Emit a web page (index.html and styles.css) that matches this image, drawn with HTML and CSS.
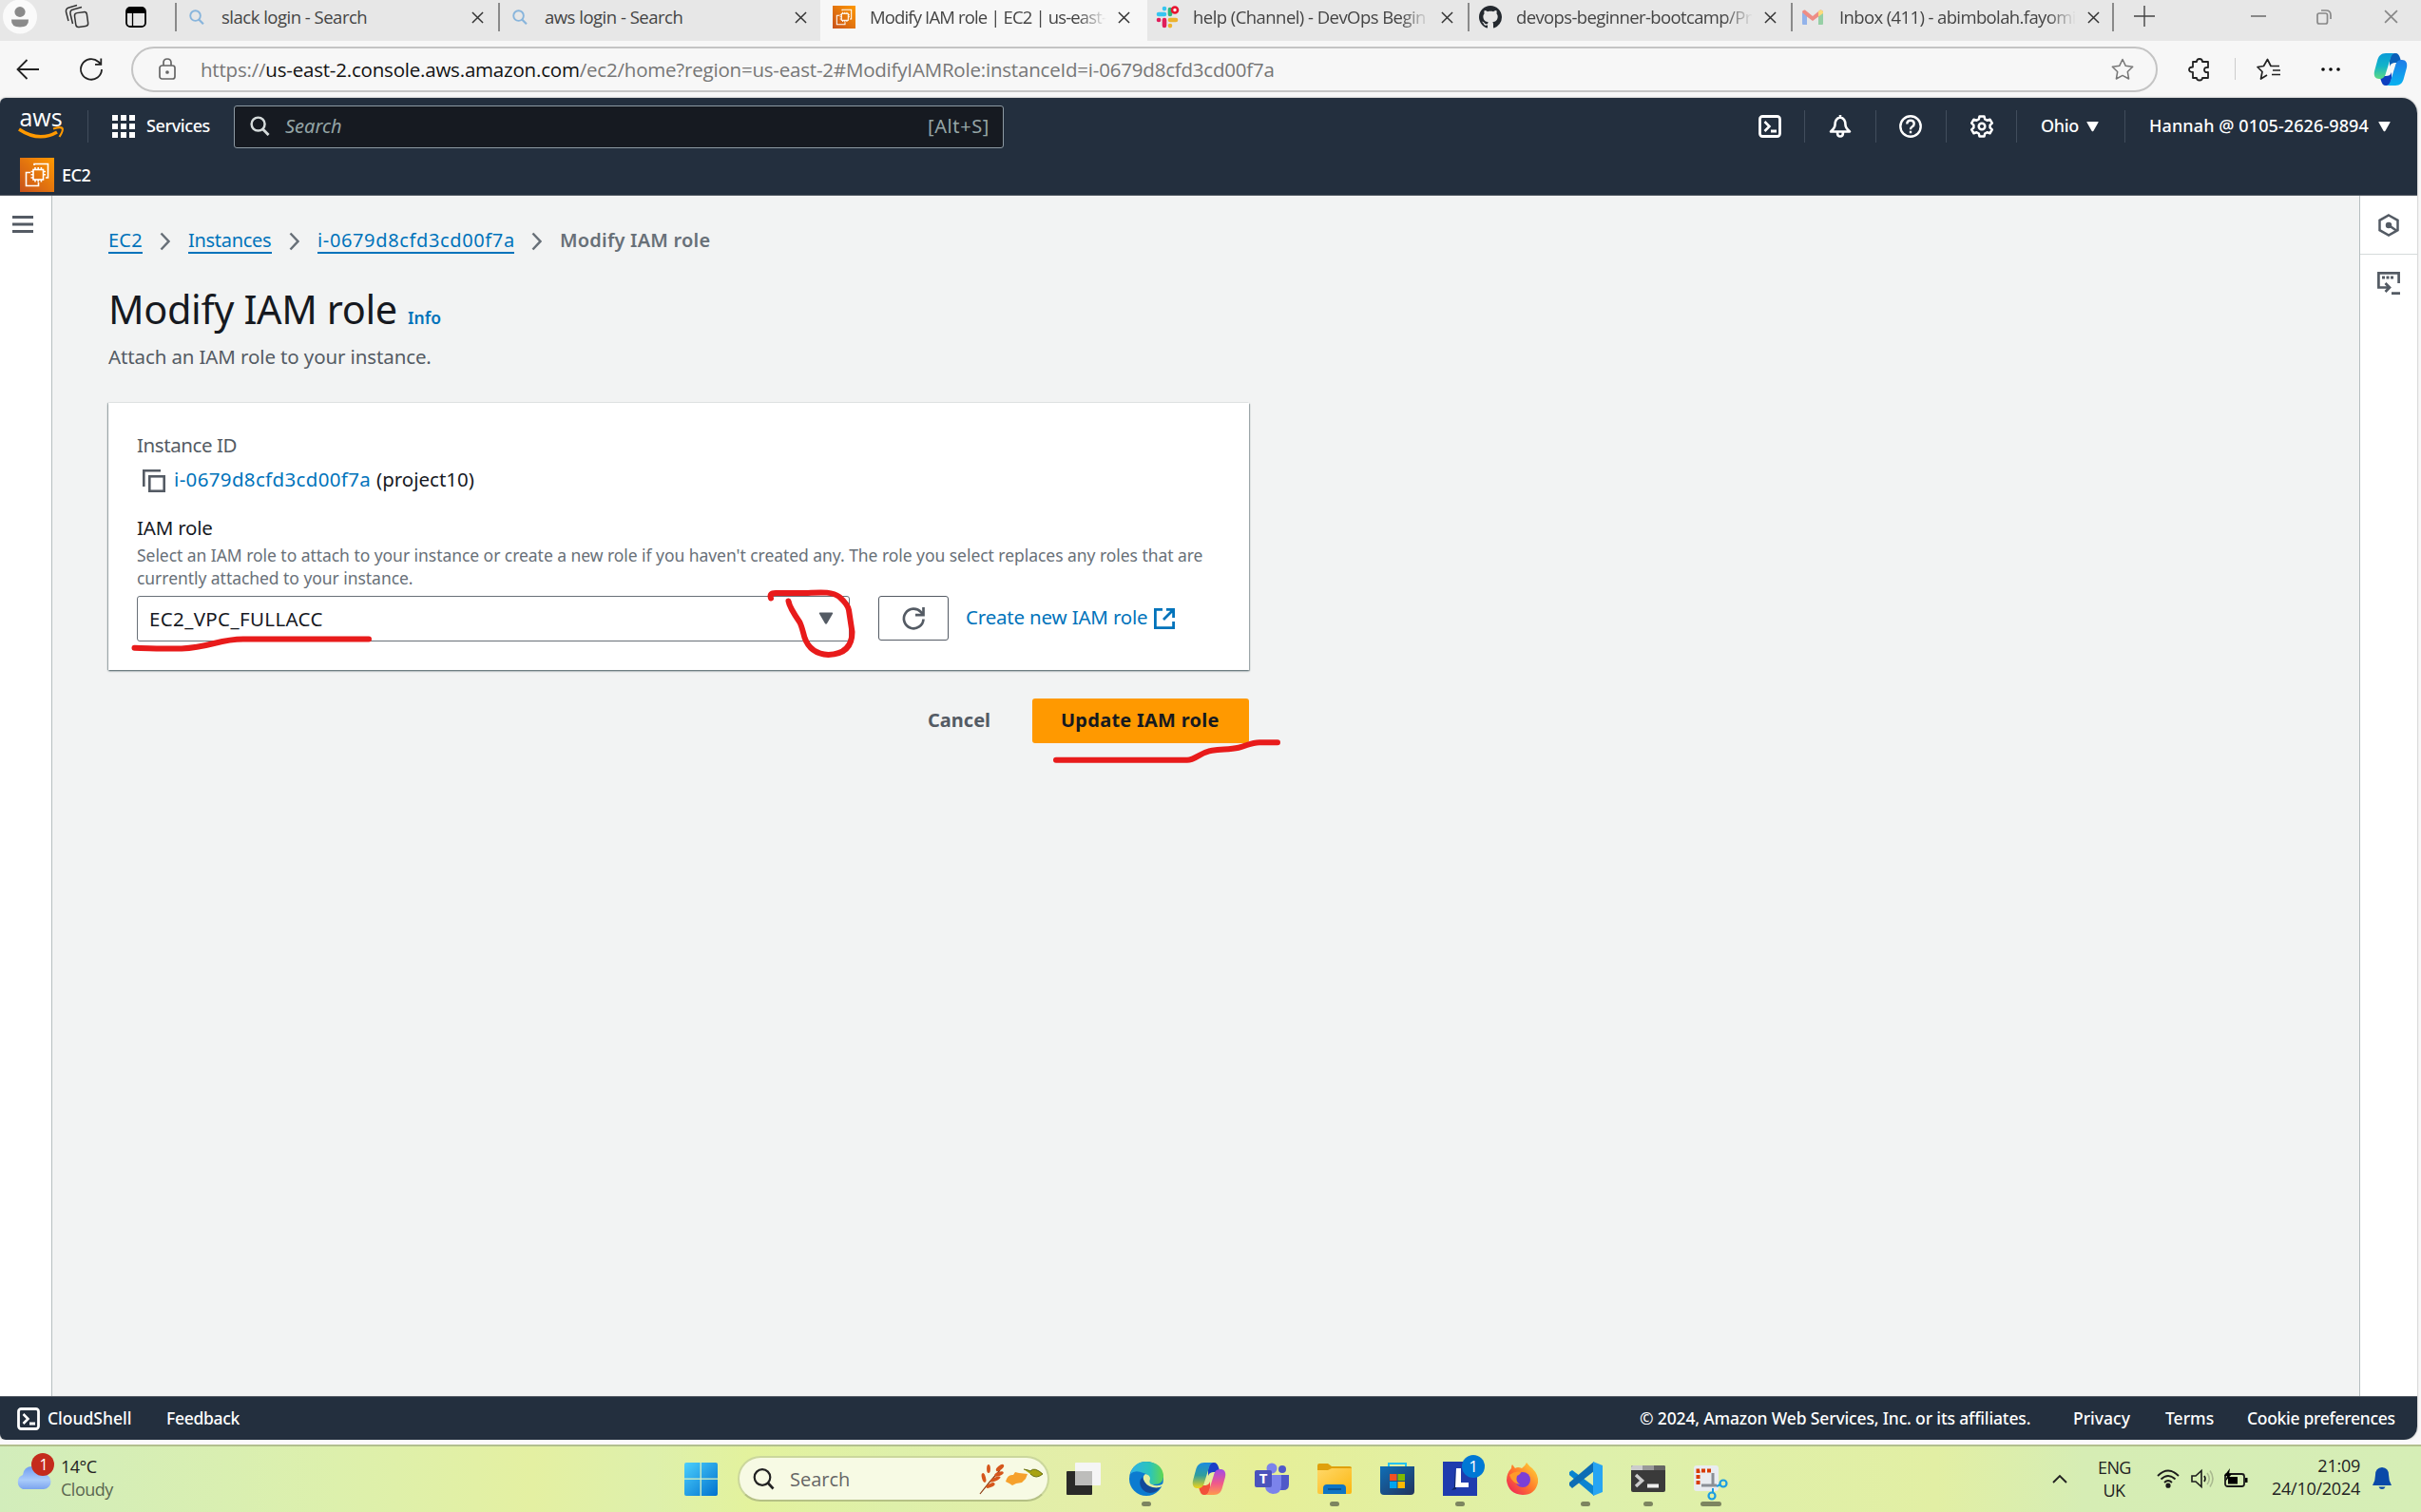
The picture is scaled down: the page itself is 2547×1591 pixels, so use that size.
FILE: index.html
```html
<!DOCTYPE html>
<html lang="en">
<head>
<meta charset="utf-8">
<title>Modify IAM role | EC2 | us-east-2</title>
<link rel="stylesheet" href="styles.css">
</head>
<body>
<svg class="defs" width="0" height="0">
  <defs>
    <linearGradient id="ec2g" x1="0" y1="1" x2="1" y2="0"><stop offset="0" stop-color="#c8511b"/><stop offset="1" stop-color="#f90"/></linearGradient>
    <linearGradient id="wing" x1="0" y1="0" x2="1" y2="1"><stop offset="0" stop-color="#4cd0fd"/><stop offset="1" stop-color="#0071ce"/></linearGradient>
    <linearGradient id="cpa" x1="0" y1="0" x2="0" y2="1"><stop offset="0" stop-color="#0a9bd8"/><stop offset=".5" stop-color="#12b4c8"/><stop offset="1" stop-color="#5fd983"/></linearGradient>
    <linearGradient id="cpb" x1="0" y1="0" x2="0" y2="1"><stop offset="0" stop-color="#08b3f0"/><stop offset="1" stop-color="#1f7be8"/></linearGradient>
    <linearGradient id="cpc" x1="0" y1="0" x2="0" y2="1"><stop offset="0" stop-color="#1a8be0"/><stop offset=".5" stop-color="#2f9e9c"/><stop offset="1" stop-color="#f3d516"/></linearGradient>
    <linearGradient id="cpd" x1="0" y1="0" x2="0" y2="1"><stop offset="0" stop-color="#ff9a4d"/><stop offset=".45" stop-color="#f0598a"/><stop offset="1" stop-color="#a14be8"/></linearGradient>
    <linearGradient id="edgea" x1="0" y1="0" x2="1" y2="0"><stop offset="0" stop-color="#2fb2e8"/><stop offset=".6" stop-color="#2cc5b8"/><stop offset="1" stop-color="#61d84e"/></linearGradient>
    <linearGradient id="fold" x1="0" y1="0" x2="1" y2="1"><stop offset="0" stop-color="#ffd869"/><stop offset="1" stop-color="#fcb710"/></linearGradient>
    <linearGradient id="store" x1="0" y1="0" x2="1" y2="1"><stop offset="0" stop-color="#0f6fb8"/><stop offset="1" stop-color="#22335c"/></linearGradient>
    <linearGradient id="fox" x1="1" y1="0" x2="0" y2="1"><stop offset="0" stop-color="#ffe23a"/><stop offset=".5" stop-color="#ff7a2b"/><stop offset="1" stop-color="#ec1361"/></linearGradient>
    <linearGradient id="cloud" x1="0" y1="0" x2="0" y2="1"><stop offset="0" stop-color="#6f9cf0"/><stop offset=".6" stop-color="#a9cbfa"/><stop offset="1" stop-color="#7ba4ee"/></linearGradient>
    <symbol id="x" viewBox="0 0 14 14"><path d="M1 1l12 12M13 1L1 13" fill="none" stroke="currentColor" stroke-width="1.6"/></symbol>
    <symbol id="mag" viewBox="0 0 22 22"><circle cx="9" cy="9" r="7.3" fill="none" stroke="currentColor" stroke-width="2.6"/><path d="M14 14.5l6.5 6.5" stroke="currentColor" stroke-width="3"/></symbol>
    <symbol id="ec2" viewBox="0 0 36 36"><rect width="36" height="36" fill="url(#ec2g)"/><g fill="none" stroke="#fff" stroke-width="1.6"><rect x="14" y="12.5" width="10.5" height="10.5"/><path d="M15 8V6.5h14.5V21H27M11 15.500H6.500V29.500H19.500V26M16 10v2.500M19.200 10v2.500M22.400 10v2.500M16 23v2.500M19.200 23v2.500M22.400 23v2.500M11.500 14.500H14M11.500 17.700H14M11.500 21H14M24.500 14.500H27M24.500 17.700H27"/></g></symbol>
    <symbol id="shell" viewBox="0 0 24 24"><rect x="1.500" y="1.500" width="21" height="21" rx="2.800" fill="none" stroke="#fff" stroke-width="2.800"/><path d="M6.500 7l5 5-5 5" fill="none" stroke="#fff" stroke-width="2.500"/><path d="M13 17h6" stroke="#fff" stroke-width="2.800"/></symbol>
    <symbol id="tri" viewBox="0 0 14 12"><path d="M1 .5h12q1 0 .5 1L8 11q-1 1.500-2 0L.5 1.500Q0 .5 1 .5z" fill="currentColor"/></symbol>
    <symbol id="chev" viewBox="0 0 12 20"><path d="M1.500 1.500l8 8.500-8 8.500" fill="none" stroke="#687078" stroke-width="2.500"/></symbol>
    <symbol id="ribbon" viewBox="0 0 36 34"><path d="M13 0h10c-3 0-4 2-5 5l-5 16c-1 4-3 6-7 6C2 27 0 24 1 19L4 8c1-5 4-8 9-8z"/></symbol>
    <symbol id="foldtop" viewBox="0 0 36 34"><path d="M17 7c1-4 2-7 5-7h1c3 0 4 2 5 5l1.500 5H23c-3 0-5 1-6 4z"/></symbol>
  </defs>
</svg>

<div class="tabstrip">
  <svg class="avatar" viewBox="0 0 36 36"><circle cx="18" cy="17.500" r="18" fill="#fafafa"/><ellipse cx="18" cy="12.500" rx="5.600" ry="5.400" fill="#8a8a8a"/><path d="M9 20.500h18q.5 8-9 8t-9-8z" fill="#8a8a8a"/></svg>
  <svg class="workspaces" viewBox="0 0 26 24" fill="none" stroke="#333" stroke-width="1.500"><rect x="11" y="8" width="13" height="15" rx="3" transform="rotate(-8 18 15)"/><path d="M8.500 20L6 9.500q-.5-4 3-4.500l9-2.500M4 17L1.500 7.500Q1 4 4.500 3L13 .5"/></svg>
  <svg class="tabactions" viewBox="0 0 22 22"><rect x="1" y="1" width="20" height="20" rx="4" fill="none" stroke="#000" stroke-width="1.800"/><path d="M1 7V4q0-3 4-3h12q4 0 4 3v3z"/><path d="M7.500 7v14" stroke="#000" stroke-width="1.300"/></svg>

  <div class="tab"><svg class="fav small"><use href="#mag"/></svg><span class="tab-title t-short">slack login - Search</span><svg class="close"><use href="#x"/></svg></div>
  <div class="tab"><svg class="fav small"><use href="#mag"/></svg><span class="tab-title t-short">aws login - Search</span><svg class="close"><use href="#x"/></svg></div>
  <div class="tab active"><svg class="fav"><use href="#ec2"/></svg><span class="tab-title fade t-iam">Modify IAM role | EC2 | us-east-</span><svg class="close"><use href="#x"/></svg></div>
  <div class="tab no-sep"><svg class="fav" viewBox="0 0 24 24" stroke-width="4.600" stroke-linecap="round"><path d="M9 3v.1M3 9h6" stroke="#36c5f0"/><path d="M15 4v5" stroke="#2eb67d"/><path d="M15 15h6M15 21v.1" stroke="#ecb22e"/><path d="M9 15v6M3 15h.1" stroke="#e01e5a"/><circle cx="20" cy="4.500" r="3" fill="#fff" stroke="#e8132f" stroke-width="2.600"/></svg><span class="tab-title fade">help (Channel) - DevOps Begin</span><svg class="close"><use href="#x"/></svg></div>
  <div class="tab"><svg class="fav" viewBox="0 0 16 16"><path fill="#24292f" d="M8 0C3.580 0 0 3.580 0 8c0 3.540 2.290 6.530 5.470 7.590.4.070.55-.17.55-.38 0-.19-.01-.82-.01-1.490-2.010.37-2.530-.49-2.690-.94-.09-.23-.48-.94-.82-1.130-.28-.15-.68-.52-.01-.53.63-.01 1.080.58 1.230.82.72 1.210 1.870.87 2.330.66.070-.52.28-.87.510-1.070-1.780-.2-3.640-.89-3.640-3.950 0-.87.310-1.590.82-2.150-.08-.2-.36-1.020.08-2.120 0 0 .67-.21 2.200.82.64-.18 1.320-.27 2-.27s1.360.09 2 .27c1.530-1.040 2.200-.82 2.200-.82.44 1.100.16 1.920.08 2.120.51.56.82 1.270.82 2.150 0 3.070-1.870 3.750-3.650 3.950.29.25.54.73.54 1.480 0 1.070-.01 1.930-.01 2.200 0 .21.15.46.55.38A8.010 8.010 0 0 0 16 8c0-4.420-3.580-8-8-8z"/></svg><span class="tab-title fade t-gh">devops-beginner-bootcamp/Pr</span><svg class="close"><use href="#x"/></svg></div>
  <div class="tab last"><svg class="fav gm" viewBox="0 0 22 16"><path d="M0 3v12q0 1 1 1h4V6z" fill="#93b3ea"/><path d="M22 3v12q0 1-1 1h-4V6z" fill="#96cfa5"/><path d="M0 3q0-3 3-2.500L11 7l8-6.500Q22 0 22 3L17 7.500 11 12 5 7.500z" fill="#ee8d85"/><path d="M17 2l2-1.500Q22 0 22 3v1l-5 3.500z" fill="#fbdc7c"/></svg><span class="tab-title fade t-gm">Inbox (411) - abimbolah.fayomi</span><svg class="close"><use href="#x"/></svg></div>
  <svg class="newtab" viewBox="0 0 22 22"><path d="M11 0v22M0 11h22" stroke="#444" stroke-width="1.400"/></svg>
  <svg class="winmin" viewBox="0 0 16 2"><path d="M0 1h16" stroke="#888" stroke-width="2"/></svg>
  <svg class="winres" viewBox="0 0 16 16" fill="none" stroke="#888" stroke-width="1.700"><rect x="1" y="4" width="10.500" height="11" rx="2"/><path d="M5 1h5q5 0 5 5v4"/></svg>
  <svg class="winclose"><use href="#x"/></svg>
</div>

<div class="toolbar">
  <svg class="back" viewBox="0 0 24 22" fill="none" stroke="#222" stroke-width="1.800"><path d="M24 11H1.500M11.500 1L1.500 11l10 10"/></svg>
  <svg class="reload" viewBox="0 0 24 24" fill="none" stroke="#222" stroke-width="1.800"><path d="M23 12a11 10.800 0 1 1-3.500-8L22 6.500M22.300.5v6.300H16"/></svg>
  <div class="urlbar">
    <svg class="lock" viewBox="0 0 18 23" fill="none" stroke="#666" stroke-width="1.700"><rect x="1" y="8" width="16" height="14" rx="2.500"/><path d="M5 8V5q0-4 4-4t4 4v3"/><circle cx="9" cy="15" r="1" fill="#666"/></svg>
    <span class="url">https://<b>us-east-2.console.aws.amazon.com</b>/ec2/home?region=us-east-2#ModifyIAMRole:instanceId=i-0679d8cfd3cd00f7a</span>
    <svg class="star" viewBox="0 0 24 24" fill="none" stroke="#777" stroke-width="1.500" stroke-linejoin="round"><path d="M12 1.500l3.300 6.800 7.400 1-5.400 5.200 1.300 7.500-6.600-3.600L5.400 22l1.300-7.500L1.300 9.300l7.400-1z"/></svg>
  </div>
  <svg class="puzzle" viewBox="0 0 24 24" fill="none" stroke="#222" stroke-width="1.800" stroke-linejoin="round"><path d="M5 4h4q0-3 3-3t3 3h6v6q-4-.5-4 2.500T21 15v6h-6q0 2.500-3 2.500T9 21H5v-6q-4 0-4-2.700T5 9.500z"/></svg>
  <i class="tsep"></i>
  <svg class="favs" viewBox="0 0 26 24" fill="none" stroke="#222" stroke-width="1.700" stroke-linejoin="round"><path d="M11 18l-6.500 4 1.500-7.500L1 9.500l6.500-1L11.500 1.500 15 8.500h9M17 13h8M16 17.500h9"/></svg>
  <svg class="dots" viewBox="0 0 20 4"><circle cx="2" cy="2" r="1.800"/><circle cx="10" cy="2" r="1.800"/><circle cx="18" cy="2" r="1.800"/></svg>
  <svg class="copilot" viewBox="0 0 36 34"><use href="#foldtop" width="36" height="34" fill="#0a5fb8"/><g transform="rotate(180 18 17)"><use href="#foldtop" width="36" height="34" fill="#0d3fc0"/><use href="#ribbon" width="36" height="34" fill="url(#cpb)"/></g><use href="#ribbon" width="36" height="34" fill="url(#cpa)"/></svg>
</div>

<div class="console">
  <header>
    <div class="nav">
      <div class="aws"><span>aws</span><svg viewBox="0 0 48 17"><path d="M1 2Q22 16 41 5" fill="none" stroke="#f90" stroke-width="3.500"/><path d="M37 1.500q8-2.500 9.500-.5t-3 9" fill="none" stroke="#f90" stroke-width="2.200"/></svg></div>
      <i class="nsep first"></i>
      <svg class="apps" viewBox="0 0 24 24" fill="#fff"><path d="M0 0h6v6H0zM9 0h6v6H9zM18 0h6v6h-6zM0 9h6v6H0zM9 9h6v6H9zM18 9h6v6h-6zM0 18h6v6H0zM9 18h6v6H9zM18 18h6v6h-6z"/></svg>
      <span class="services">Services</span>
      <div class="search"><svg><use href="#mag"/></svg><em>Search</em><span>[Alt+S]</span></div>
      <div class="navright">
        <svg class="ni"><use href="#shell"/></svg><i class="nsep"></i>
        <svg class="ni" viewBox="0 0 24 24" fill="none" stroke="#fff" stroke-width="2.600" stroke-linejoin="round"><path d="M12 2.500q5.500 1 5.500 8 0 3 4.500 7H2q4.500-4 4.500-7 0-7 5.500-8zM9 18.500q0 4 3 4t3-4M12 0v3"/></svg><i class="nsep"></i>
        <svg class="ni" viewBox="0 0 24 24" fill="none" stroke="#fff" stroke-width="2.400"><circle cx="12" cy="12" r="10.700"/><path d="M8.300 9.500q0-3.700 3.700-3.700t3.700 3.400q0 2-1.900 3T12 15v.3M12 16.800v2.400"/></svg><i class="nsep"></i>
        <svg class="ni" viewBox="0 0 24 24" fill="none" stroke="#fff" stroke-width="2.500" stroke-linejoin="round"><path d="M9.500 1.500h5l.7 3 2.300 1.200 3-1 2.300 4-2.200 2v2.600l2.200 2-2.300 4-3-1-2.300 1.200-.7 3h-5l-.7-3-2.300-1.200-3 1-2.300-4 2.200-2v-2.600l-2.200-2 2.300-4 3 1 2.300-1.200z"/><circle cx="12" cy="12" r="3.300"/></svg><i class="nsep"></i>
        <span class="ohio">Ohio</span><svg class="caret"><use href="#tri"/></svg><i class="nsep ns2"></i>
        <span class="user">Hannah @ 0105-2626-9894</span><svg class="caret"><use href="#tri"/></svg>
      </div>
    </div>
    <div class="favbar"><svg><use href="#ec2"/></svg><span>EC2</span></div>
  </header>

  <div class="body">
    <aside class="left"><svg viewBox="0 0 22 18" stroke="#545b64" stroke-width="3"><path d="M0 1.500h22M0 9h22M0 16.500h22"/></svg></aside>
    <main>
      <nav class="crumbs"><a class="c1">EC2</a><svg><use href="#chev"/></svg><a class="c2">Instances</a><svg><use href="#chev"/></svg><a class="c3">i-0679d8cfd3cd00f7a</a><svg><use href="#chev"/></svg><strong>Modify IAM role</strong></nav>
      <h1><span>Modify IAM role</span><small>Info</small></h1>
      <p class="desc">Attach an IAM role to your instance.</p>
      <section class="card">
        <div class="label muted">Instance ID</div>
        <div class="instance"><svg viewBox="0 0 24 24" fill="none" stroke="#545b64" stroke-width="2.600"><path d="M1.300 18V1.300H19"/><rect x="7.300" y="7.300" width="15.400" height="15.400"/></svg><a>i-0679d8cfd3cd00f7a</a><span>(project10)</span></div>
        <div class="label iam">IAM role</div>
        <p class="help"><span>Select an IAM role to attach to your instance or create a new role if you haven't created any. The role you select replaces any roles that are</span><br><span>currently attached to your instance.</span></p>
        <div class="controls">
          <div class="select"><span>EC2_VPC_FULLACC</span><svg><use href="#tri"/></svg></div>
          <div class="refresh"><svg viewBox="0 0 24 24" fill="none" stroke="#545b64" stroke-width="2.700"><path d="M22.500 12.500A10.300 10.300 0 1 1 20 5.200l2 2M22.500 0v8.200H14"/></svg></div>
          <a class="create">Create new IAM role</a>
          <svg class="ext" viewBox="0 0 22 22" fill="none" stroke="#0073bb" stroke-width="2.800"><path d="M9 1.400H1.400v19.200h19.200V14M13 1.400h7.600V10M20 2L10 12"/></svg>
        </div>
      </section>
      <div class="actions"><span class="cancel">Cancel</span><div class="update"><span>Update IAM role</span></div></div>
    </main>
    <aside class="right">
      <div class="tool"><svg viewBox="0 0 24 24" fill="none" stroke="#545b64" stroke-width="2.500"><path d="M12 1.500l9.500 5.300v10.400L12 22.500l-9.500-5.300V6.800z"/><circle cx="12" cy="12" r="2" fill="#545b64"/><path d="M12 12l8 5.500"/></svg></div>
      <div class="tool"><svg viewBox="0 0 24 24" fill="none" stroke="#545b64" stroke-width="2.700"><path d="M7 16.500H1.400V1.400h21.200V12M15 22.700h9M5 16.500h8M8.500 12l4.500 4.500L8.500 21"/><path d="M5 6h3M9.500 6h3M14 6h3" stroke-width="3"/></svg></div>
    </aside>
  </div>

  <footer><svg><use href="#shell"/></svg><span class="f1">CloudShell</span><span class="f2">Feedback</span><span class="f3">© 2024, Amazon Web Services, Inc. or its affiliates.</span><span class="f4">Privacy</span><span class="f5">Terms</span><span class="f6">Cookie preferences</span></footer>
</div>

<div class="taskbar">
  <div class="weather"><svg viewBox="0 0 42 40"><path d="M8 38a8 8 0 0 1 0-15q1-9 10-9t11 8a8 8 0 0 1 1 16z" fill="url(#cloud)"/><circle cx="29" cy="12" r="12" fill="#c42b1c"/><text x="30" y="18" text-anchor="middle" class="wbadge">1</text></svg><div><span class="temp">14°C</span><span class="cond">Cloudy</span></div></div>
  <div class="approw">
    <svg class="win" viewBox="0 0 36 36" fill="url(#wing)"><rect width="36" height="36" rx="2"/><path d="M17.700 0v36M0 17.700h36" stroke="#dff3c0" stroke-width="1.300"/></svg>
    <div class="tsearch"><svg class="tm" viewBox="0 0 22 22"><circle cx="10" cy="9.500" r="8.300" fill="none" stroke="#222" stroke-width="2.200"/><path d="M15.500 15l6 6.500" stroke="#222" stroke-width="2.600"/></svg><span>Search</span>
      <svg class="leaves" viewBox="0 0 66 31"><path d="M0 31Q10 18 21 6" stroke="#8c3a12" stroke-width="1.200" fill="none"/><g fill="#d5561b"><ellipse cx="9" cy="4.500" rx="1.900" ry="4.500"/><ellipse cx="21" cy="3.500" rx="2.300" ry="5" transform="rotate(50 21 3.500)"/><ellipse cx="4" cy="14" rx="2" ry="5" transform="rotate(-15 4 14)"/><ellipse cx="16" cy="15.500" rx="2" ry="6" transform="rotate(65 16 15.500)"/><ellipse cx="20" cy="10" rx="2" ry="5" transform="rotate(70 20 10)"/><ellipse cx="11" cy="22" rx="2" ry="5" transform="rotate(65 11 22)"/></g><path d="M21 18h6q2-8 8-7l2-3 4 1 9 1-2 5-4 4-6 1-4 2-3-2-4-2z" fill="#f6a12c"/><path d="M46 5q6 1 7 2 4-5 13 3-7 6-13 0" fill="#a8a312" stroke="#6a7010" stroke-width="1"/></svg></div>
    <div class="app first"><svg viewBox="0 0 36 36"><rect y="10" width="27" height="25" rx="1" fill="#2a2a28"/><rect x="9" y="1" width="27" height="24" rx="1" fill="#f5f5f5"/><rect x="9" y="10" width="18" height="15" fill="#bdbdbb"/></svg></div>
    <div class="app run"><svg viewBox="0 0 36 36"><circle cx="18" cy="18" r="18" fill="#0c7bd0"/><path d="M1 13Q5 0 18 0q17 1 18 15 0 9-10 9-7 0-5-4 1-7-6-8Q6 8 1 13z" fill="url(#edgea)"/><path d="M34 26q-6 4-13 1-5-3-6-8-1-4 2-6 5 1 5 5-2 5 2 6 6 3 12-1l1 2z" fill="#e3efa0"/><path d="M14 16q-5 5-1 12 6 8 16 3l4-4q-12 2-17-6-2-3-2-5z" fill="#12499a"/></svg></div>
    <div class="app"><svg viewBox="0 0 36 34"><use href="#foldtop" width="36" height="34" fill="#1a3fc8"/><g transform="rotate(180 18 17)"><use href="#foldtop" width="36" height="34" fill="#f2503a"/><use href="#ribbon" width="36" height="34" fill="url(#cpd)"/></g><use href="#ribbon" width="36" height="34" fill="url(#cpc)"/></svg></div>
    <div class="app"><svg viewBox="0 0 36 36"><circle cx="29" cy="8" r="4" fill="#5059c9"/><path d="M26 14h10v10q0 6-6 6h-4z" fill="#5059c9"/><circle cx="18" cy="7" r="5.500" fill="#7b83eb"/><path d="M11 14h17v11q0 9-9 9-8-1-8-9z" fill="#7b83eb"/><rect y="9" width="18" height="18" rx="2" fill="#4b53bc"/><text x="9" y="23" text-anchor="middle" class="teamst">T</text></svg></div>
    <div class="app run"><svg viewBox="0 0 36 36"><path d="M0 4q0-2 2-2h9l4 3h19q2 0 2 2v4H0z" fill="#dfa00c"/><path d="M0 9h11l4-2h21v25q0 2-2 2H2q-2 0-2-2z" fill="url(#fold)"/><path d="M6 34v-6q0-4 4-4h16q4 0 4 4v6z" fill="#0f75c4"/><path d="M11 29h14" stroke="#0a4a86" stroke-width="1.500"/></svg></div>
    <div class="app"><svg viewBox="0 0 36 36"><path d="M9 7V2h18v5" fill="none" stroke="#25c3f0" stroke-width="2"/><path d="M0 5h36v26q0 4-4 4H4q-4 0-4-4z" fill="url(#store)"/><path d="M10 13h7.500v7H10z" fill="#f25022"/><path d="M18.500 13H26v7h-7.500z" fill="#7fba00"/><path d="M10 21h7.500v7H10z" fill="#00a4ef"/><path d="M18.500 21H26v7h-7.500z" fill="#ffb900"/></svg></div>
    <div class="app run"><svg viewBox="0 0 36 36"><rect width="36" height="36" fill="#1f3cae"/><path d="M13 7l-1 20-3 3 5-1" fill="#0d2560"/><path d="M14 7h5v15h8v5H13z" fill="#fff"/></svg><b class="count">1</b></div>
    <div class="app"><svg viewBox="0 0 36 36"><path d="M22 1q3 4 6 6 7 7 6 15-3 13-16 13Q3 34 1 20 1 12 6 7q0-3 1-4l3 4q3-2 7 0 4-3 5-6z" fill="url(#fox)"/><circle cx="18" cy="19" r="8" fill="#7b3fd6"/><path d="M4 14q6-5 12-3 0 2-4 4-2 6 3 9-8-1-11-10z" fill="#ff9a2b"/></svg></div>
    <div class="app run"><svg viewBox="0 0 36 36"><path d="M1 11l3-2L27 26v10L1 14z" fill="#0a84d0"/><path d="M1 25l3 3L27 10V0L1 22z" fill="#0d6db5"/><path d="M26 0l10 4v28l-10 4z" fill="#27a5f3"/></svg></div>
    <div class="app run"><svg viewBox="0 0 36 36"><rect y="4" width="36" height="28" rx="2" fill="#3a3a3a"/><path d="M0 9V6q0-2 2-2h10v5z" fill="#ccc"/><path d="M12 4h12v5H12z" fill="#999"/><path d="M24 4h10q2 0 2 2v3H24z" fill="#666"/><path d="M5 14l6.500 6L5 26" fill="none" stroke="#ccc" stroke-width="3.500"/><path d="M17 25.500h12" stroke="#eee" stroke-width="4"/></svg></div>
    <div class="app run wide"><svg viewBox="0 0 36 36"><rect y="4" width="26" height="27" rx="3" fill="#e9ecf0"/><path d="M4.500 24V9.500H20" fill="none" stroke="#d83b01" stroke-width="4" stroke-dasharray="4 2"/><path d="M20 12v14M8 25h16" stroke="#8a8f96" stroke-width="3"/><circle cx="31" cy="23" r="3.500" fill="none" stroke="#1b9de2" stroke-width="2.200"/><circle cx="19" cy="36" r="3.500" fill="none" stroke="#1b9de2" stroke-width="2.200"/><path d="M24 26l4-2M20 28v5" stroke="#1b9de2" stroke-width="2"/></svg></div>
  </div>
  <div class="tray">
    <svg class="up" viewBox="0 0 16 10"><path d="M1 9l7-7 7 7" fill="none" stroke="#222" stroke-width="1.900"/></svg>
    <div class="lang"><span>ENG</span><span>UK</span></div>
    <svg class="wifi" viewBox="0 0 24 20" fill="none" stroke="#1b1b1b" stroke-width="1.800"><path d="M1 7q11-11 22 0M4.500 10.500q7.500-7 15 0M8 14q4-4 8 0"/><circle cx="12" cy="17.200" r="1.700" fill="#1b1b1b"/></svg>
    <svg class="vol" viewBox="0 0 24 20" fill="none" stroke="#1b1b1b" stroke-width="1.600"><path d="M1 7h4l6-5.500v17L5 13H1z"/><path d="M14 7q2 3 0 6"/><path d="M17 4q4.500 6 0 12M20 1.500q6 8.500 0 17" stroke="#a9b98f"/></svg>
    <svg class="bat" viewBox="0 0 25 20"><rect x="1" y="5" width="20" height="13" rx="2.500" fill="none" stroke="#1b1b1b" stroke-width="1.800"/><path d="M4 8h10v7.500H4z"/><path d="M22 9h2.500v5H22z"/><path d="M6-1L0 7h3l-2 6 7-8H5z"/></svg>
    <div class="clock"><span class="time">21:09</span><span class="date">24/10/2024</span></div>
    <svg class="tbell" viewBox="0 0 20 23" fill="#0a4aa8"><path d="M10 0q7 .5 7 8 0 6 3 11H0q3-5 3-11 0-7.500 7-8zM6.500 20.500h7Q12.500 23 10 23t-3.500-2.500z"/></svg>
  </div>
</div>

<svg class="ink" viewBox="0 0 2547 1591" fill="none" stroke="#e81b1b" stroke-width="6" stroke-linecap="round" stroke-linejoin="round">
  <path d="M141.500 681.700C158 682 175 683 191 682.500C222 681 230 672.500 256 672.500H388"/>
  <path d="M811 629.500q-2-5.500 5-5.500h26c16 0 32-3 41 4q9 8 10 14l3.500 23q0 23-25 24-19-1-25-18c-2-7-3-12-5-16q-11-16-12-22.500"/>
  <path d="M1111 799.700H1249c9 0 13-8 26-10 13-1.500 19-1 28-3 9-2 13-5.500 22-5.500h19"/>
</svg>
</body>
</html>
```
FILE: styles.css
```css
* { box-sizing: border-box; }
body { margin: 0; width: 2547px; height: 1591px; overflow: hidden; position: relative; display: flex; flex-direction: column; background: #f7f7f7; font-family: "Noto Sans", "Open Sans", sans-serif; color: #16191f; }
svg { display: block; flex: none; overflow: visible; }
.defs { position: absolute; }
span, a, strong, em { white-space: nowrap; }
i { display: block; flex: none; }

/* browser tabs */
.tabstrip { height: 43px; flex: none; background: #e7e7e7; display: flex; align-items: flex-start; font-family: "Open Sans", sans-serif; font-size: 18.500px; color: #444; }
.avatar { width: 36px; height: 36px; margin-left: 3px; }
.workspaces { width: 26px; height: 24px; margin: 5px 0 0 29px; }
.tabactions { width: 22px; height: 22px; margin: 7px 30px 0 38px; }
.tab { width: 340px; height: 43px; flex: none; position: relative; display: flex; align-items: center; padding: 0 15px 7px 15px; }
.tab::before { content: ""; position: absolute; left: 0; top: 3px; width: 2px; height: 30px; background: #8a8a8a; }
.tab.active::before, .tab.no-sep::before { display: none; }
.tab.last::after { content: ""; position: absolute; right: 0; top: 3px; width: 2px; height: 30px; background: #8a8a8a; }
.tab.active { background: #f7f7f7; box-shadow: -1px 0 0 #f7f7f7, 3px 0 0 #f7f7f7; }
.fav { width: 24px; height: 24px; margin-right: 15px; margin-left: -3px; }
.fav.small { width: 16px; height: 16px; color: #88b5dc; margin: 0 18px 0 0; }
.fav.gm { width: 22px; height: 16px; margin-right: 17px; margin-left: -3px; }
.tab-title { flex: 1; line-height: 30px; }
.fade { -webkit-mask-image: linear-gradient(90deg, #000 88%, transparent 100%); margin-right: 12px; letter-spacing: -.55px; }
.t-iam { letter-spacing: -.85px; }
.t-gh, .t-gm { letter-spacing: -.62px; }
.t-short { letter-spacing: -.5px; }
.close { width: 13px; height: 13px; color: #333; }
.newtab { width: 22px; height: 22px; margin: 6px 0 0 21px; }
.winmin { width: 16px; height: 2px; margin: 16px 0 0 101px; }
.winres { width: 16px; height: 16px; margin: 10px 0 0 53px; }
.winclose { width: 15px; height: 15px; margin: 10px 0 0 55px; color: #888; }

/* browser toolbar */
.toolbar { height: 60px; flex: none; display: flex; align-items: center; padding-bottom: 1px; background: #f7f7f7; }
.back { width: 24px; height: 22px; margin-left: 17px; }
.reload { width: 24px; height: 24px; margin-left: 43px; }
.urlbar { width: 2132px; height: 48px; margin-left: 30px; border: 2px solid #c4c4c4; border-radius: 24px; display: flex; align-items: center; padding: 0 23px 0 27px; }
.lock { width: 18px; height: 23px; }
.url { margin-left: 26px; font: 20.500px/40px "Open Sans", sans-serif; color: #767676; letter-spacing: -.2px; }
.url b { font-weight: 400; color: #111; }
.star { width: 24px; height: 24px; margin-left: auto; }
.puzzle { width: 24px; height: 24px; margin-left: 32px; }
.tsep { width: 1px; height: 23px; background: #ccc; margin-left: 25px; }
.favs { width: 26px; height: 24px; margin-left: 22px; }
.dots { width: 20px; height: 4px; margin-left: 42px; }
.copilot { width: 36px; height: 34px; margin-left: 35px; }

/* console chrome */
.console { width: 2543px; height: 1412px; flex: none; display: flex; flex-direction: column; background: #f2f3f3; border-radius: 6px 16px 14px 6px; overflow: hidden; box-shadow: 0 0 2px #888; }
header { height: 103px; flex: none; background: #232f3e; border-bottom: 1px solid #545b64; color: #fff; }
.nav { height: 60px; display: flex; align-items: center; padding-right: 28px; font-size: 18px; font-weight: 500; }
.nav > span, .navright > span { padding-bottom: 2px; }
.aws { width: 48px; margin-left: 19px; height: 36px; margin-top: -5px; }
.aws span { display: block; font: 500 25px/22px "Open Sans", sans-serif; letter-spacing: 0; height: 22px; text-align: center; margin-top: -1px; }
.aws svg { width: 48px; height: 17px; }
.nsep { width: 1px; height: 34px; background: #414d5c; margin: 0 24.700px; }
.nsep.first { margin: 0 25px; }
.apps { width: 24px; height: 24px; }
.services { margin-left: 12px; width: 92px; letter-spacing: -.4px; }
.search { width: 810px; height: 45px; border: 1px solid #8d9aa3; border-radius: 3px; background: #161a21; display: flex; align-items: center; padding: 0 14px 2px 16px; color: #95a5a6; font-size: 20px; font-weight: 400; }
.search svg { width: 21px; height: 21px; color: #d5dbdb; }
.search em { margin-left: 16px; }
.search span { margin-left: auto; letter-spacing: .6px; }
.navright { margin-left: auto; display: flex; align-items: center; }
.ni { width: 24px; height: 24px; }
.ohio { width: 40px; letter-spacing: -.3px; }
.user { width: 233px; letter-spacing: .1px; }
.caret { width: 13px; height: 12px; margin-left: 8px; }
.ns2 { margin: 0 25px 0 27px; }
.favbar { height: 42px; display: flex; align-items: center; padding-left: 21px; font-size: 18px; font-weight: 500; }
.favbar svg { width: 36px; height: 36px; }
.favbar span { margin-left: 8px; letter-spacing: -.5px; }

.body { height: 1263px; flex: none; display: flex; }
.left { width: 55px; background: #fff; border-right: 1px solid #b6bec0; padding: 21px 0 0 13px; flex: none; }
.left svg { width: 22px; height: 18px; }
.right { width: 61px; background: #fff; border-left: 1px solid #b6bec0; flex: none; }
.tool { height: 62px; border-bottom: 1px solid #d5dbdb; display: flex; align-items: center; justify-content: center; }
.tool:last-child { border: 0; height: 59px; }
.tool svg { width: 24px; height: 24px; }
main { flex: 1; background: #f2f3f3; padding: 34px 0 0 59px; font-size: 20.500px; }

.crumbs { display: flex; align-items: flex-start; height: 27px; line-height: 25px; font-size: 20px; }
.crumbs a { color: #0073bb; border-bottom: 2px solid #0073bb; height: 27px; }
.crumbs svg { width: 12px; height: 20px; margin: 4px 18px 0 18px; }
.crumbs strong { color: #687078; font-weight: 600; letter-spacing: .2px; }
.c1 { width: 36px; letter-spacing: .2px; }
.c2 { width: 88px; letter-spacing: -.3px; }
.c3 { width: 207px; letter-spacing: .64px; }
h1 { margin: 33px 0 0; height: 50px; line-height: 50px; font-size: 41.500px; font-weight: 400; display: flex; align-items: baseline; }
h1 span { width: 315px; letter-spacing: -.4px; }
h1 small { font-size: 17.500px; font-weight: 600; color: #0073bb; }
.desc { margin: 10px 0 0; line-height: 30px; color: #545b64; letter-spacing: -.12px; }
.card { margin-top: 34px; width: 1200px; height: 281px; background: #fff; padding: 29px 30px 0 30px; box-shadow: 0 1px 2px 0 rgba(0,28,36,.6), 1px 1px 1px rgba(0,28,36,.2), -1px 0 1px rgba(0,28,36,.2); }
.label { line-height: 30px; }
.muted { color: #545b64; letter-spacing: -.42px; }
.instance { display: flex; align-items: center; height: 30px; margin-top: 6px; padding-left: 6px; }
.instance svg { width: 24px; height: 24px; margin-top: 4px; }
.instance a { color: #0073bb; margin-left: 9px; width: 213px; letter-spacing: .35px; }
.iam { margin-top: 21px; letter-spacing: -.2px; }
.help { margin: 2px 0 0; font-size: 17.500px; line-height: 24px; color: #687078; letter-spacing: -.047px; }
.controls { margin-top: 7px; display: flex; align-items: flex-start; }
.select { width: 750px; height: 48px; border: 1px solid #687078; border-radius: 3px; display: flex; align-items: center; justify-content: space-between; padding: 0 16px 1px 12px; letter-spacing: .37px; }
.select svg { width: 16px; height: 13px; color: #545b64; }
.refresh { width: 74px; height: 47px; margin-left: 30px; border: 1.500px solid #545b64; border-radius: 3px; display: flex; align-items: center; justify-content: center; }
.refresh svg { width: 24px; height: 24px; }
.create { color: #0073bb; margin-left: 18px; width: 198px; line-height: 45px; letter-spacing: -.18px; }
.ext { width: 22px; height: 22px; margin-top: 13px; }
.actions { margin-top: 30px; width: 1200px; height: 47px; display: flex; align-items: center; justify-content: flex-end; font-weight: 700; font-size: 20px; }
.cancel { width: 66px; margin-right: 44px; color: #545b64; padding-bottom: 2px; }
.update { width: 228px; height: 47px; border-radius: 3px; background: #f90; display: flex; align-items: center; padding: 0 0 2px 30px; letter-spacing: .25px; }

footer { height: 46px; flex: none; background: #232f3e; border-top: 1px solid #545b64; color: #fff; display: flex; align-items: center; font-size: 17.500px; font-weight: 500; padding-left: 18px; }
footer svg { width: 24px; height: 24px; }
footer span { padding-bottom: 2px; }
.f1 { margin-left: 8px; width: 125px; }
.f2 { width: 1550px; letter-spacing: -.3px; }
.f3 { width: 456px; letter-spacing: -.15px; }
.f4 { width: 97px; }
.f5 { width: 86px; }
.f6 { letter-spacing: -.3px; }

/* desktop taskbar */
.taskbar { margin-top: 5px; height: 71px; flex: none; border-top: 2px solid #b2bf8e; position: relative; display: flex; background: linear-gradient(90deg, #d2edbb 0, #ddf0ac 14%, #e4f0a2 22%, #def0ab 27%, #e3f29d 31%, #def0aa 37%, #e4eea8 45%, #e6ef98 52%, #def0ab 66%, #e2efa4 80%, #d6edb4 86%, #d6eeb6 100%); font-family: "Open Sans", sans-serif; color: #222; font-size: 18px; }
.taskbar::before { content: ""; position: absolute; inset: -7px 0 auto 0; height: 5px; background: #fbf9fb; }
.weather { width: 700px; flex: none; display: flex; padding: 7px 0 0 16px; }
.weather svg { width: 42px; height: 40px; }
.weather div { margin-left: 6px; display: flex; flex-direction: column; margin-top: 2px; }
.weather span { line-height: 24px; letter-spacing: -.5px; }
.cond { color: #5a6650; }
.wbadge { font: 16px "Open Sans", sans-serif; fill: #fff; }
.approw { display: flex; align-items: flex-start; width: 1160px; flex: none; padding-left: 20px; }
.win { width: 35px; height: 35px; margin-top: 17px; }
.tsearch { width: 328px; flex: none; height: 48px; margin: 10px 0 0 21px; border: 2px solid #cbd79c; border-bottom-color: #b5c185; border-radius: 24px; background: #f7fae4; display: flex; align-items: center; padding: 0 5px 0 14px; color: #666; font-size: 20px; }
.tm { width: 22px; height: 22px; }
.tsearch span { margin-left: 17px; }
.leaves { width: 66px; height: 31px; margin-left: auto; }
.app { width: 36px; height: 68px; margin-right: 30px; position: relative; padding-top: 16px; flex: none; }
.app.first { margin-left: 18px; }
.app svg { width: 36px; height: 36px; }
.run::after { content: ""; position: absolute; left: 13px; top: 58px; width: 10px; height: 5px; border-radius: 3px; background: #7d8560; }
.wide::after { left: 7px; width: 22px; }
.teamst { font: 700 15px "Open Sans", sans-serif; fill: #fff; }
.count { position: absolute; left: 20px; top: 9px; width: 24px; height: 24px; border-radius: 50%; background: #0078d4; color: #fff; font-weight: 400; font-size: 17px; line-height: 24px; text-align: center; }
.tray { flex: 1; display: flex; align-items: center; justify-content: flex-end; padding: 0 31px 2px 0; }
.up { width: 16px; height: 10px; }
.lang { width: 34px; margin: 0 28px 0 32px; }
.lang span, .clock span { display: block; line-height: 24px; letter-spacing: -.6px; text-align: center; }
.wifi { width: 24px; height: 20px; }
.vol { width: 24px; height: 20px; margin-left: 12px; }
.bat { width: 25px; height: 20px; margin-left: 11px; }
.clock { width: 100px; margin: -4px 13px 0 18px; }
.clock span { text-align: right; letter-spacing: -.25px; }
.tbell { width: 20px; height: 23px; }

.ink { position: absolute; left: 0; top: 0; width: 2547px; height: 1591px; pointer-events: none; }
```
